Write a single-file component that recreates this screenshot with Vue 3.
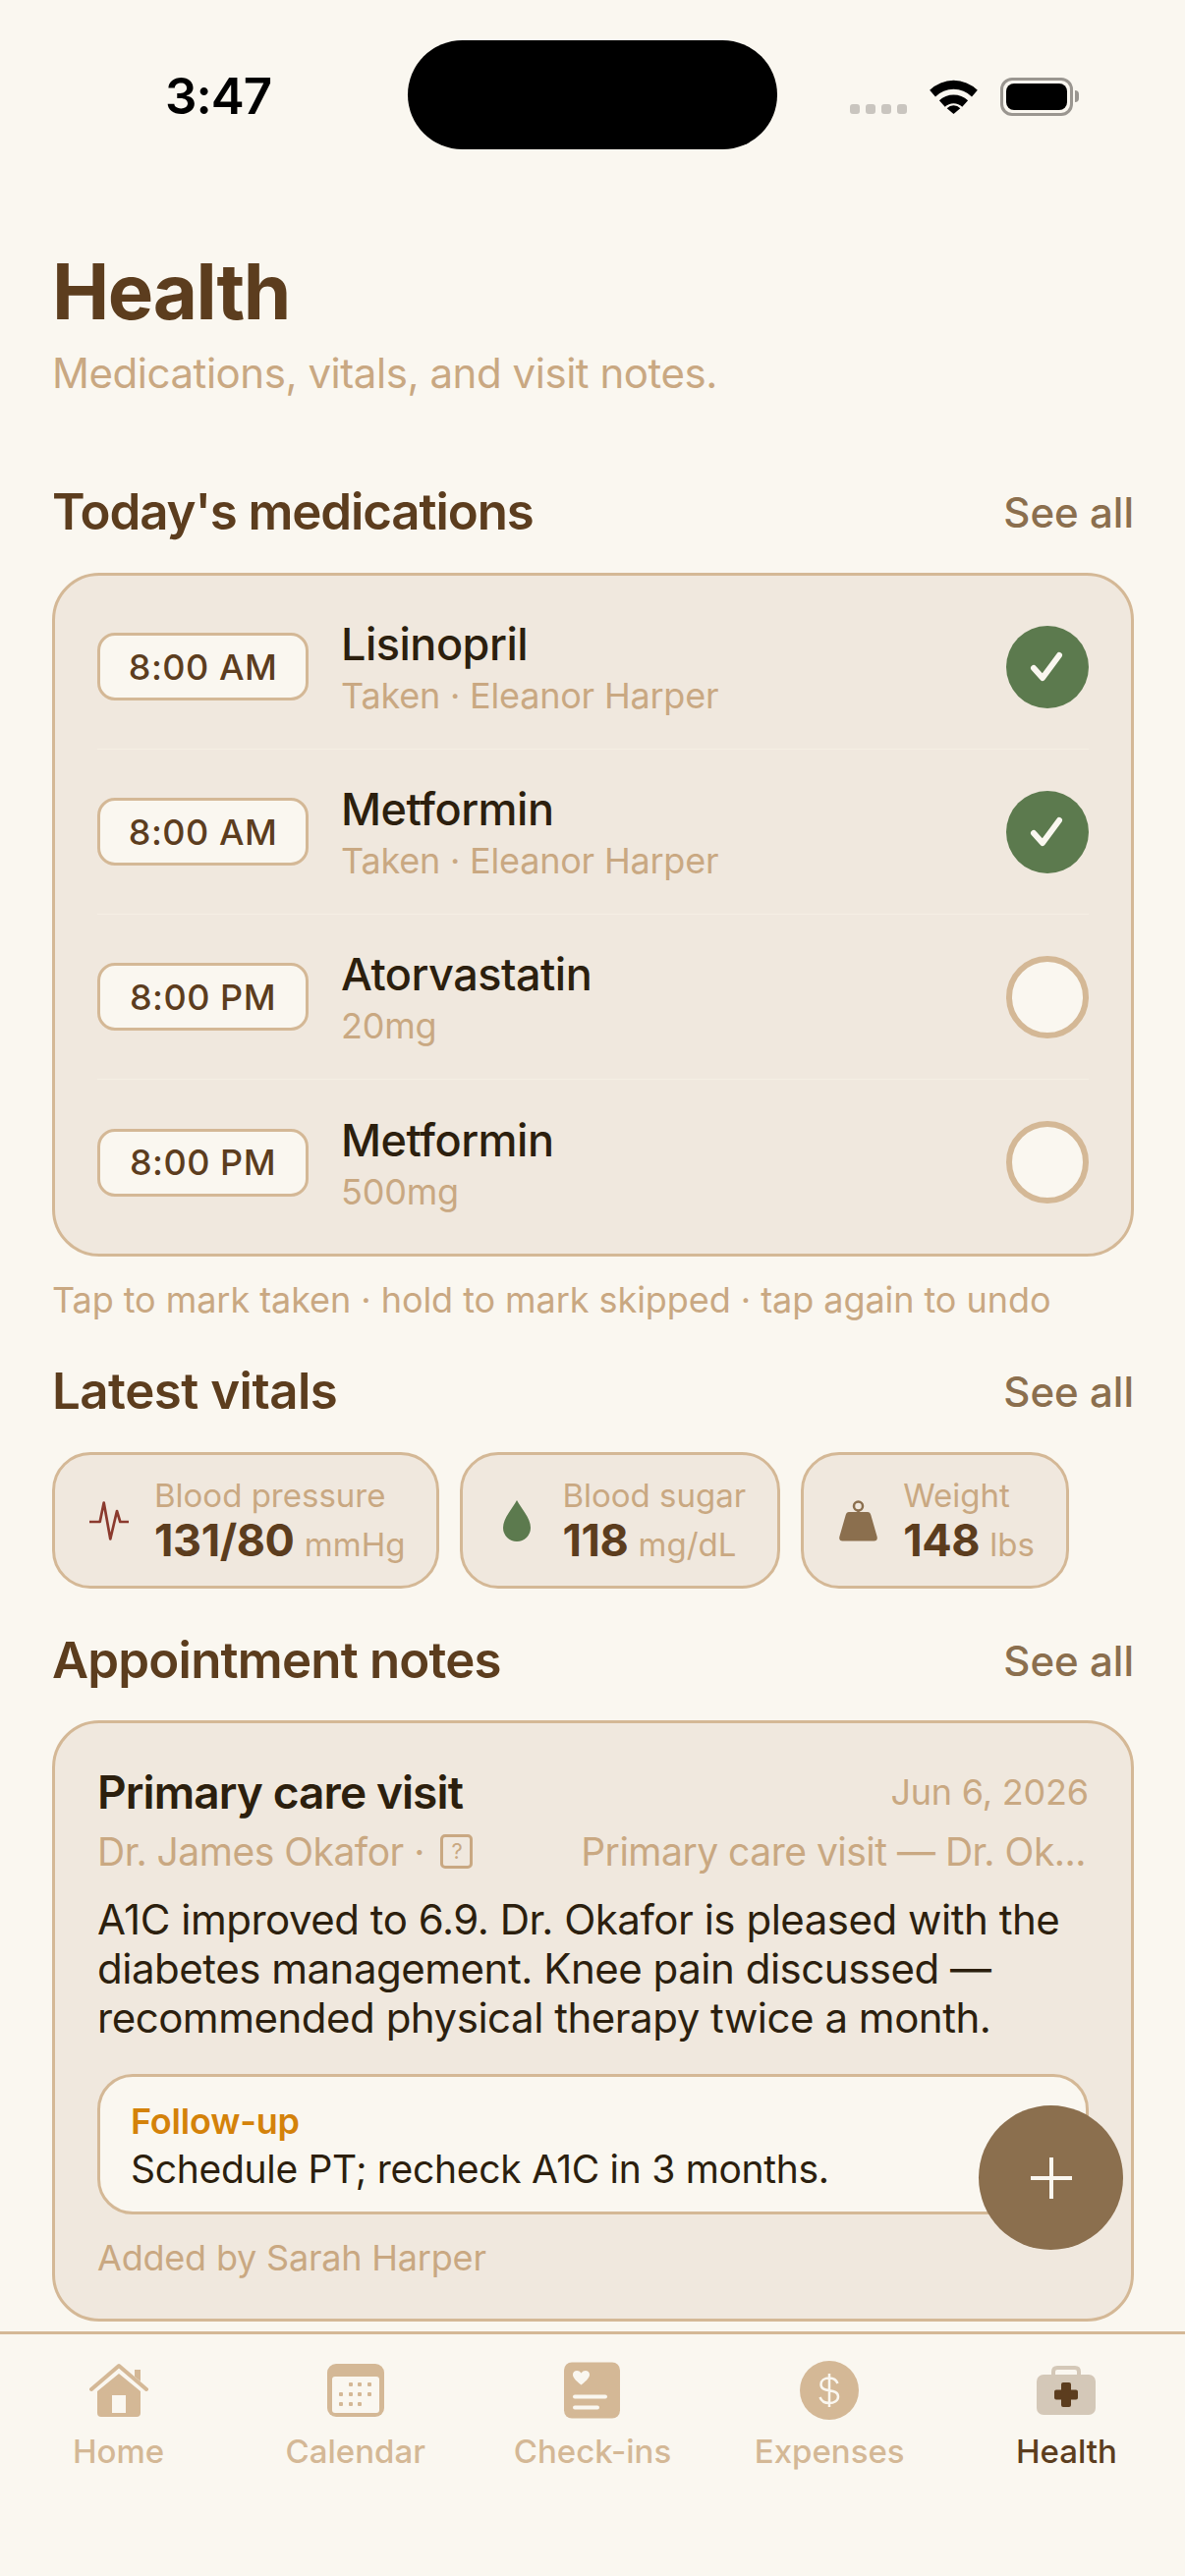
<script setup>
const meds = [
  { time: '8:00 AM', name: 'Lisinopril', sub: 'Taken · Eleanor Harper', done: true },
  { time: '8:00 AM', name: 'Metformin', sub: 'Taken · Eleanor Harper', done: true },
  { time: '8:00 PM', name: 'Atorvastatin', sub: '20mg', done: false },
  { time: '8:00 PM', name: 'Metformin', sub: '500mg', done: false },
]
const tabs = ['Home', 'Calendar', 'Check-ins', 'Expenses', 'Health']
</script>

<template>
  <div class="phone">
    <div class="status">
      <div class="clock-box"><span class="clock">3:47</span></div>
      <div class="island"></div>
      <div class="status-right">
        <div class="dots"><i></i><i></i><i></i><i></i></div>
        <svg width="51" height="37" viewBox="0 0 52 38">
          <path d="M1 13 A36 36 0 0 1 51 13 L45 20 A27 27 0 0 0 7 20Z" fill="#000" />
          <path d="M11 24 A22 22 0 0 1 41 24 L35 30.500 A13 13 0 0 0 17 30.500Z" fill="#000" />
          <path d="M19 32 A10 10 0 0 1 33 32 L26 38Z" fill="#000" />
        </svg>
        <div class="battery"><div class="battery-fill"></div></div>
      </div>
    </div>

    <main class="content">
      <h1>Health</h1>
      <p class="lead">Medications, vitals, and visit notes.</p>

      <div class="section-head first">
        <h2 class="tight">Today's medications</h2>
        <span class="see">See all</span>
      </div>
      <section class="card meds">
        <div v-for="(m, i) in meds" :key="i" class="med">
          <span class="time">{{ m.time }}</span>
          <div class="med-text">
            <div class="med-name">{{ m.name }}</div>
            <div class="muted">{{ m.sub }}</div>
          </div>
          <div class="check" :class="{ done: m.done }">
            <svg v-if="m.done" width="36" height="32" viewBox="0 0 36 32">
              <path d="M4 17 L13 27 L30 4" fill="none" stroke="#faf7f0" stroke-width="6" stroke-linecap="round" stroke-linejoin="round" />
            </svg>
          </div>
        </div>
      </section>
      <p class="hint">Tap to mark taken · hold to mark skipped · tap again to undo</p>

      <div class="section-head vitals-head">
        <h2 class="loose">Latest vitals</h2>
        <span class="see">See all</span>
      </div>
      <div class="vitals">
        <div class="vital">
          <div class="vital-icon">
            <svg width="40" height="40" viewBox="0 0 40 40">
              <path d="M0 21 H10.700 L14.700 1.500 L21.300 38.500 L28 10 L31.300 21 H40" fill="none" stroke="#8b3a2e" stroke-width="2.700" stroke-linejoin="round" />
            </svg>
          </div>
          <div class="vital-text">
            <div class="vital-label">Blood pressure</div>
            <div class="vital-value">131/80 <small>mmHg</small></div>
          </div>
        </div>
        <div class="vital">
          <div class="vital-icon">
            <svg width="28" height="42" viewBox="0 0 28 42">
              <path d="M14 0 C18 8 28 18 28 28 A14 14 0 0 1 0 28 C0 18 10 8 14 0Z" fill="#5c7a4e" />
            </svg>
          </div>
          <div class="vital-text">
            <div class="vital-label">Blood sugar</div>
            <div class="vital-value">118 <small>mg/dL</small></div>
          </div>
        </div>
        <div class="vital">
          <div class="vital-icon">
            <svg width="39" height="42" viewBox="0 0 39 42">
              <circle cx="19.500" cy="6" r="4.500" fill="none" stroke="#8b6f4e" stroke-width="2.500" />
              <path d="M18.300 10 H20.700 V13 H18.300Z" fill="#8b6f4e" />
              <path d="M10 12 H29 Q31.500 12 32.300 15 L38.600 37 Q39.600 41.500 35.500 41.500 H3.500 Q-0.600 41.500 0.400 37 L6.700 15 Q7.500 12 10 12Z" fill="#8b6f4e" />
            </svg>
          </div>
          <div class="vital-text">
            <div class="vital-label">Weight</div>
            <div class="vital-value">148 <small>lbs</small></div>
          </div>
        </div>
      </div>

      <div class="section-head notes-head">
        <h2>Appointment notes</h2>
        <span class="see">See all</span>
      </div>
      <section class="card note">
        <div class="note-top">
          <span class="note-title">Primary care visit</span>
          <span class="muted">Jun 6, 2026</span>
        </div>
        <div class="note-meta">
          <span>Dr. James Okafor · <span class="unknown">?</span></span>
          <span class="linked">Primary care visit — Dr. Ok...</span>
        </div>
        <p class="note-body">A1C improved to 6.9. Dr. Okafor is pleased with the diabetes management. Knee pain discussed — recommended physical therapy twice a month.</p>
        <div class="follow">
          <div class="follow-label">Follow-up</div>
          <div class="follow-text">Schedule PT; recheck A1C in 3 months.</div>
        </div>
        <div class="muted added">Added by Sarah Harper</div>
      </section>
    </main>

    <button class="fab">
      <svg width="44" height="44" viewBox="0 0 44 44">
        <path d="M22 1 V43 M1 22 H43" stroke="#faf7f0" stroke-width="4" />
      </svg>
    </button>

    <nav class="tabbar">
      <div v-for="(t, i) in tabs" :key="t" class="tab" :class="{ active: i === 4 }">
        <svg v-if="i === 0" width="60" height="60" viewBox="0 0 60 54">
          <path d="M2 26 L30 2 L58 26" fill="none" stroke="#d4b896" stroke-width="4" stroke-linecap="round" stroke-linejoin="round" />
          <path d="M46 6 H52 V18 L46 13Z" fill="#d4b896" />
          <path fill-rule="evenodd" d="M30 10 L52 28 V50 Q52 54 48 54 H12 Q8 54 8 50 V28Z M23 32 V50 H37 V32Z" fill="#d4b896" />
        </svg>
        <svg v-else-if="i === 1" width="58" height="60" viewBox="0 0 58 54">
          <rect width="58" height="54" rx="9" fill="#d4b896" />
          <rect x="5" y="13" width="48" height="37" rx="3" fill="#faf7f0" />
          <g fill="#d4b896">
            <rect x="22" y="19" width="4" height="4" rx="1" /><rect x="31" y="19" width="4" height="4" rx="1" /><rect x="41" y="19" width="4" height="4" rx="1" />
            <rect x="12" y="29" width="4" height="4" rx="1" /><rect x="22" y="29" width="4" height="4" rx="1" /><rect x="31" y="29" width="4" height="4" rx="1" /><rect x="41" y="29" width="4" height="4" rx="1" />
            <rect x="12" y="39" width="4" height="4" rx="1" /><rect x="22" y="39" width="4" height="4" rx="1" /><rect x="31" y="39" width="4" height="4" rx="1" />
          </g>
        </svg>
        <svg v-else-if="i === 2" width="57" height="60" viewBox="0 0 57 57">
          <rect width="57" height="57" rx="8" fill="#d4b896" />
          <path d="M17.500 23 C11 18 9 15 9 12.500 C9 8 15 7 17.500 11 C20 7 26 8 26 12.500 C26 15 24 18 17.500 23Z" fill="#faf7f0" />
          <rect x="9" y="33" width="35" height="4" rx="2" fill="#faf7f0" />
          <rect x="9" y="44" width="27" height="4" rx="2" fill="#faf7f0" />
        </svg>
        <svg v-else-if="i === 3" width="60" height="60" viewBox="0 0 60 60">
          <circle cx="30" cy="30" r="30" fill="#d4b896" />
          <path d="M38.500 23 C37 19 34 17.500 30 17.500 C25 17.500 21.500 20 21.500 24 C21.500 33.500 39 27 39 36.500 C39 40.500 35 43 30 43 C25 43 22 41 20.500 37 M30 13 V47" fill="none" stroke="#faf7f0" stroke-width="2.500" />
        </svg>
        <svg v-else width="60" height="60" viewBox="0 0 60 50">
          <path d="M17 10 V6 Q17 2 21 2 H39 Q43 2 43 6 V10" fill="none" stroke="#d4c8b8" stroke-width="4" />
          <rect y="9" width="60" height="41" rx="7" fill="#d4c8b8" />
          <path d="M27 17 H33 Q35 17 35 19 V24.500 H40 Q42 24.500 42 26.500 V32.500 Q42 34.500 40 34.500 H35 V40 Q35 42 33 42 H27 Q25 42 25 40 V34.500 H20 Q18 34.500 18 32.500 V26.500 Q18 24.500 20 24.500 H25 V19 Q25 17 27 17Z" fill="#5c3d1e" />
        </svg>
        <span>{{ t }}</span>
      </div>
    </nav>
  </div>
</template>

<style>
html, body { margin: 0; background: #faf7f0; }
</style>

<style scoped>
.phone {
  position: relative;
  width: 1206px;
  height: 2622px;
  overflow: hidden;
  display: flex;
  flex-direction: column;
  background: #faf7f0;
  font-family: Inter, "Noto Sans", sans-serif;
  color: #2c1f0e;
}
.status {
  height: 183px;
  flex: none;
  display: flex;
  padding: 41px 114px 0 168px;
  box-sizing: border-box;
}
.clock-box {
  width: 247px;
  padding-top: 29px;
}
.clock {
  font-size: 51px;
  font-weight: 600;
  color: #000;
  line-height: 56px;
  letter-spacing: -1px;
}
.island {
  width: 376px;
  height: 111px;
  background: #000;
  border-radius: 56px;
}
.status-right {
  display: flex;
  align-items: flex-start;
  gap: 22px;
  margin-top: 38px;
  margin-left: auto;
}
.dots {
  display: flex;
  gap: 6px;
  margin-top: 27px;
}
.dots i {
  width: 10px;
  height: 10px;
  border-radius: 3px;
  background: #c9c5bf;
}
.battery {
  position: relative;
  width: 74px;
  height: 39px;
  box-sizing: border-box;
  border: 3px solid #9a9690;
  border-radius: 12px;
  padding: 3px;
}
.battery::after {
  content: '';
  position: absolute;
  right: -9px;
  top: 10px;
  width: 4px;
  height: 12px;
  background: #9a9690;
  border-radius: 0 4px 4px 0;
}
.battery-fill {
  height: 100%;
  background: #000;
  border-radius: 8px;
}
.content {
  flex: 1;
  min-height: 0;
  overflow: hidden;
  padding: 0 52px 0 53px;
}
h1 {
  margin: 66px 0 0;
  font-size: 78px;
  line-height: 96px;
  font-weight: 700;
  color: #5c3d1e;
  letter-spacing: -1.4px;
}
.lead {
  margin: 8px 0 0;
  font-size: 42px;
  line-height: 54px;
  color: #c9a882;
  letter-spacing: -0.45px;
}
.section-head {
  display: flex;
  justify-content: space-between;
  align-items: center;
}
.section-head.first { margin-top: 81px; }
.vitals-head { margin-top: 38px; }
.notes-head { margin-top: 40px; }
h2 {
  margin: 0;
  font-size: 51px;
  line-height: 66px;
  font-weight: 600;
  color: #5c3d1e;
  letter-spacing: -0.8px;
}
h2.tight { letter-spacing: -1.1px; }
h2.loose { letter-spacing: -0.5px; }
.see {
  font-size: 42px;
  font-weight: 500;
  color: #8b6f4e;
}
.card {
  background: #f0e8de;
  border: 3px solid #d4b896;
  border-radius: 48px;
  box-sizing: border-box;
}
.meds {
  margin-top: 29px;
  padding: 0 43px;
  height: 696px;
}
.med {
  height: 168px;
  display: flex;
  align-items: center;
  border-bottom: 1px solid #f5efe4;
  box-sizing: border-box;
}
.med:first-child { margin-top: 9px; }
.med:last-child { border-bottom: none; }
.time {
  width: 215px;
  height: 69px;
  box-sizing: border-box;
  display: flex;
  align-items: center;
  justify-content: center;
  background: #faf7f0;
  border: 3px solid #d4b896;
  border-radius: 18px;
  font-size: 36px;
  font-weight: 500;
  letter-spacing: 0.5px;
  color: #5c3d1e;
}
.med-text {
  flex: 1;
  margin-left: 33px;
  padding-top: 3px;
}
.med-name {
  font-size: 45px;
  line-height: 56px;
  font-weight: 500;
  letter-spacing: -0.5px;
}
.muted {
  font-size: 36px;
  line-height: 48px;
  color: #c9a882;
  letter-spacing: -0.2px;
}
.check {
  width: 84px;
  height: 84px;
  box-sizing: border-box;
  border-radius: 50%;
  border: 6px solid #d4b896;
  background: #faf7f0;
  display: flex;
  align-items: center;
  justify-content: center;
}
.check.done {
  background: #5c7a4e;
  border: none;
}
.hint {
  margin: 22px 0 0;
  font-size: 36px;
  line-height: 44px;
  color: #c9a882;
  letter-spacing: -0.06px;
}
.vitals {
  display: flex;
  gap: 21px;
  margin-top: 29px;
}
.vital {
  height: 139px;
  box-sizing: border-box;
  display: flex;
  align-items: center;
  gap: 22px;
  padding: 0 32px 0 31px;
  background: #f0e8de;
  border: 3px solid #d4b896;
  border-radius: 39px;
}
.vital-icon {
  width: 48px;
  display: flex;
  justify-content: center;
}
.vital-text { padding-top: 4px; }
.vital-label {
  font-size: 33px;
  line-height: 40px;
  color: #c9a882;
}
.vital-value {
  font-size: 45px;
  line-height: 51px;
  font-weight: 700;
  color: #5c3d1e;
  letter-spacing: -0.4px;
}
.vital-value small {
  font-size: 33px;
  font-weight: 400;
  color: #c9a882;
  letter-spacing: 0;
}
.note {
  margin-top: 28px;
  padding: 43px 43px;
  height: 612px;
}
.note-top, .note-meta {
  display: flex;
  justify-content: space-between;
  align-items: center;
}
.note-title {
  font-size: 46px;
  line-height: 54px;
  font-weight: 600;
  letter-spacing: -0.9px;
}
.note-meta {
  margin-top: 10px;
  font-size: 39px;
  line-height: 48px;
  color: #c9a882;
  letter-spacing: -0.5px;
}
.linked { margin-right: 3px; }
.unknown {
  display: inline-flex;
  align-items: center;
  justify-content: center;
  width: 33px;
  height: 35px;
  box-sizing: border-box;
  border: 3px solid #c9a882;
  border-radius: 5px;
  font-size: 22px;
  margin-left: 6px;
  vertical-align: 7px;
}
.note-body {
  margin: 20px 0 0;
  font-size: 42px;
  line-height: 50px;
  letter-spacing: -0.48px;
}
.follow {
  margin-top: 32px;
  height: 143px;
  box-sizing: border-box;
  padding: 20px 31px;
  background: #faf7f0;
  border: 3px solid #d4b896;
  border-radius: 36px;
}
.follow-label {
  font-size: 36px;
  line-height: 50px;
  font-weight: 600;
  color: #d4820a;
  letter-spacing: -0.2px;
}
.follow-text {
  font-size: 39px;
  line-height: 48px;
  letter-spacing: -0.3px;
}
.added { margin-top: 20px; }
.fab {
  position: absolute;
  right: 63px;
  bottom: 332px;
  width: 147px;
  height: 147px;
  border: none;
  border-radius: 50%;
  background: #8b6f4e;
  display: flex;
  align-items: center;
  justify-content: center;
  padding: 0;
}
.tabbar {
  flex: none;
  height: 249px;
  box-sizing: border-box;
  border-top: 3px solid #d4b896;
  display: grid;
  grid-template-columns: repeat(5, 1fr);
  padding-top: 27px;
  background: #faf7f0;
}
.tab {
  display: flex;
  flex-direction: column;
  align-items: center;
  color: #d4b896;
  font-size: 33px;
  font-weight: 500;
}
.tab span { margin-top: 12px; }
.tab.active { color: #5c3d1e; }
</style>
